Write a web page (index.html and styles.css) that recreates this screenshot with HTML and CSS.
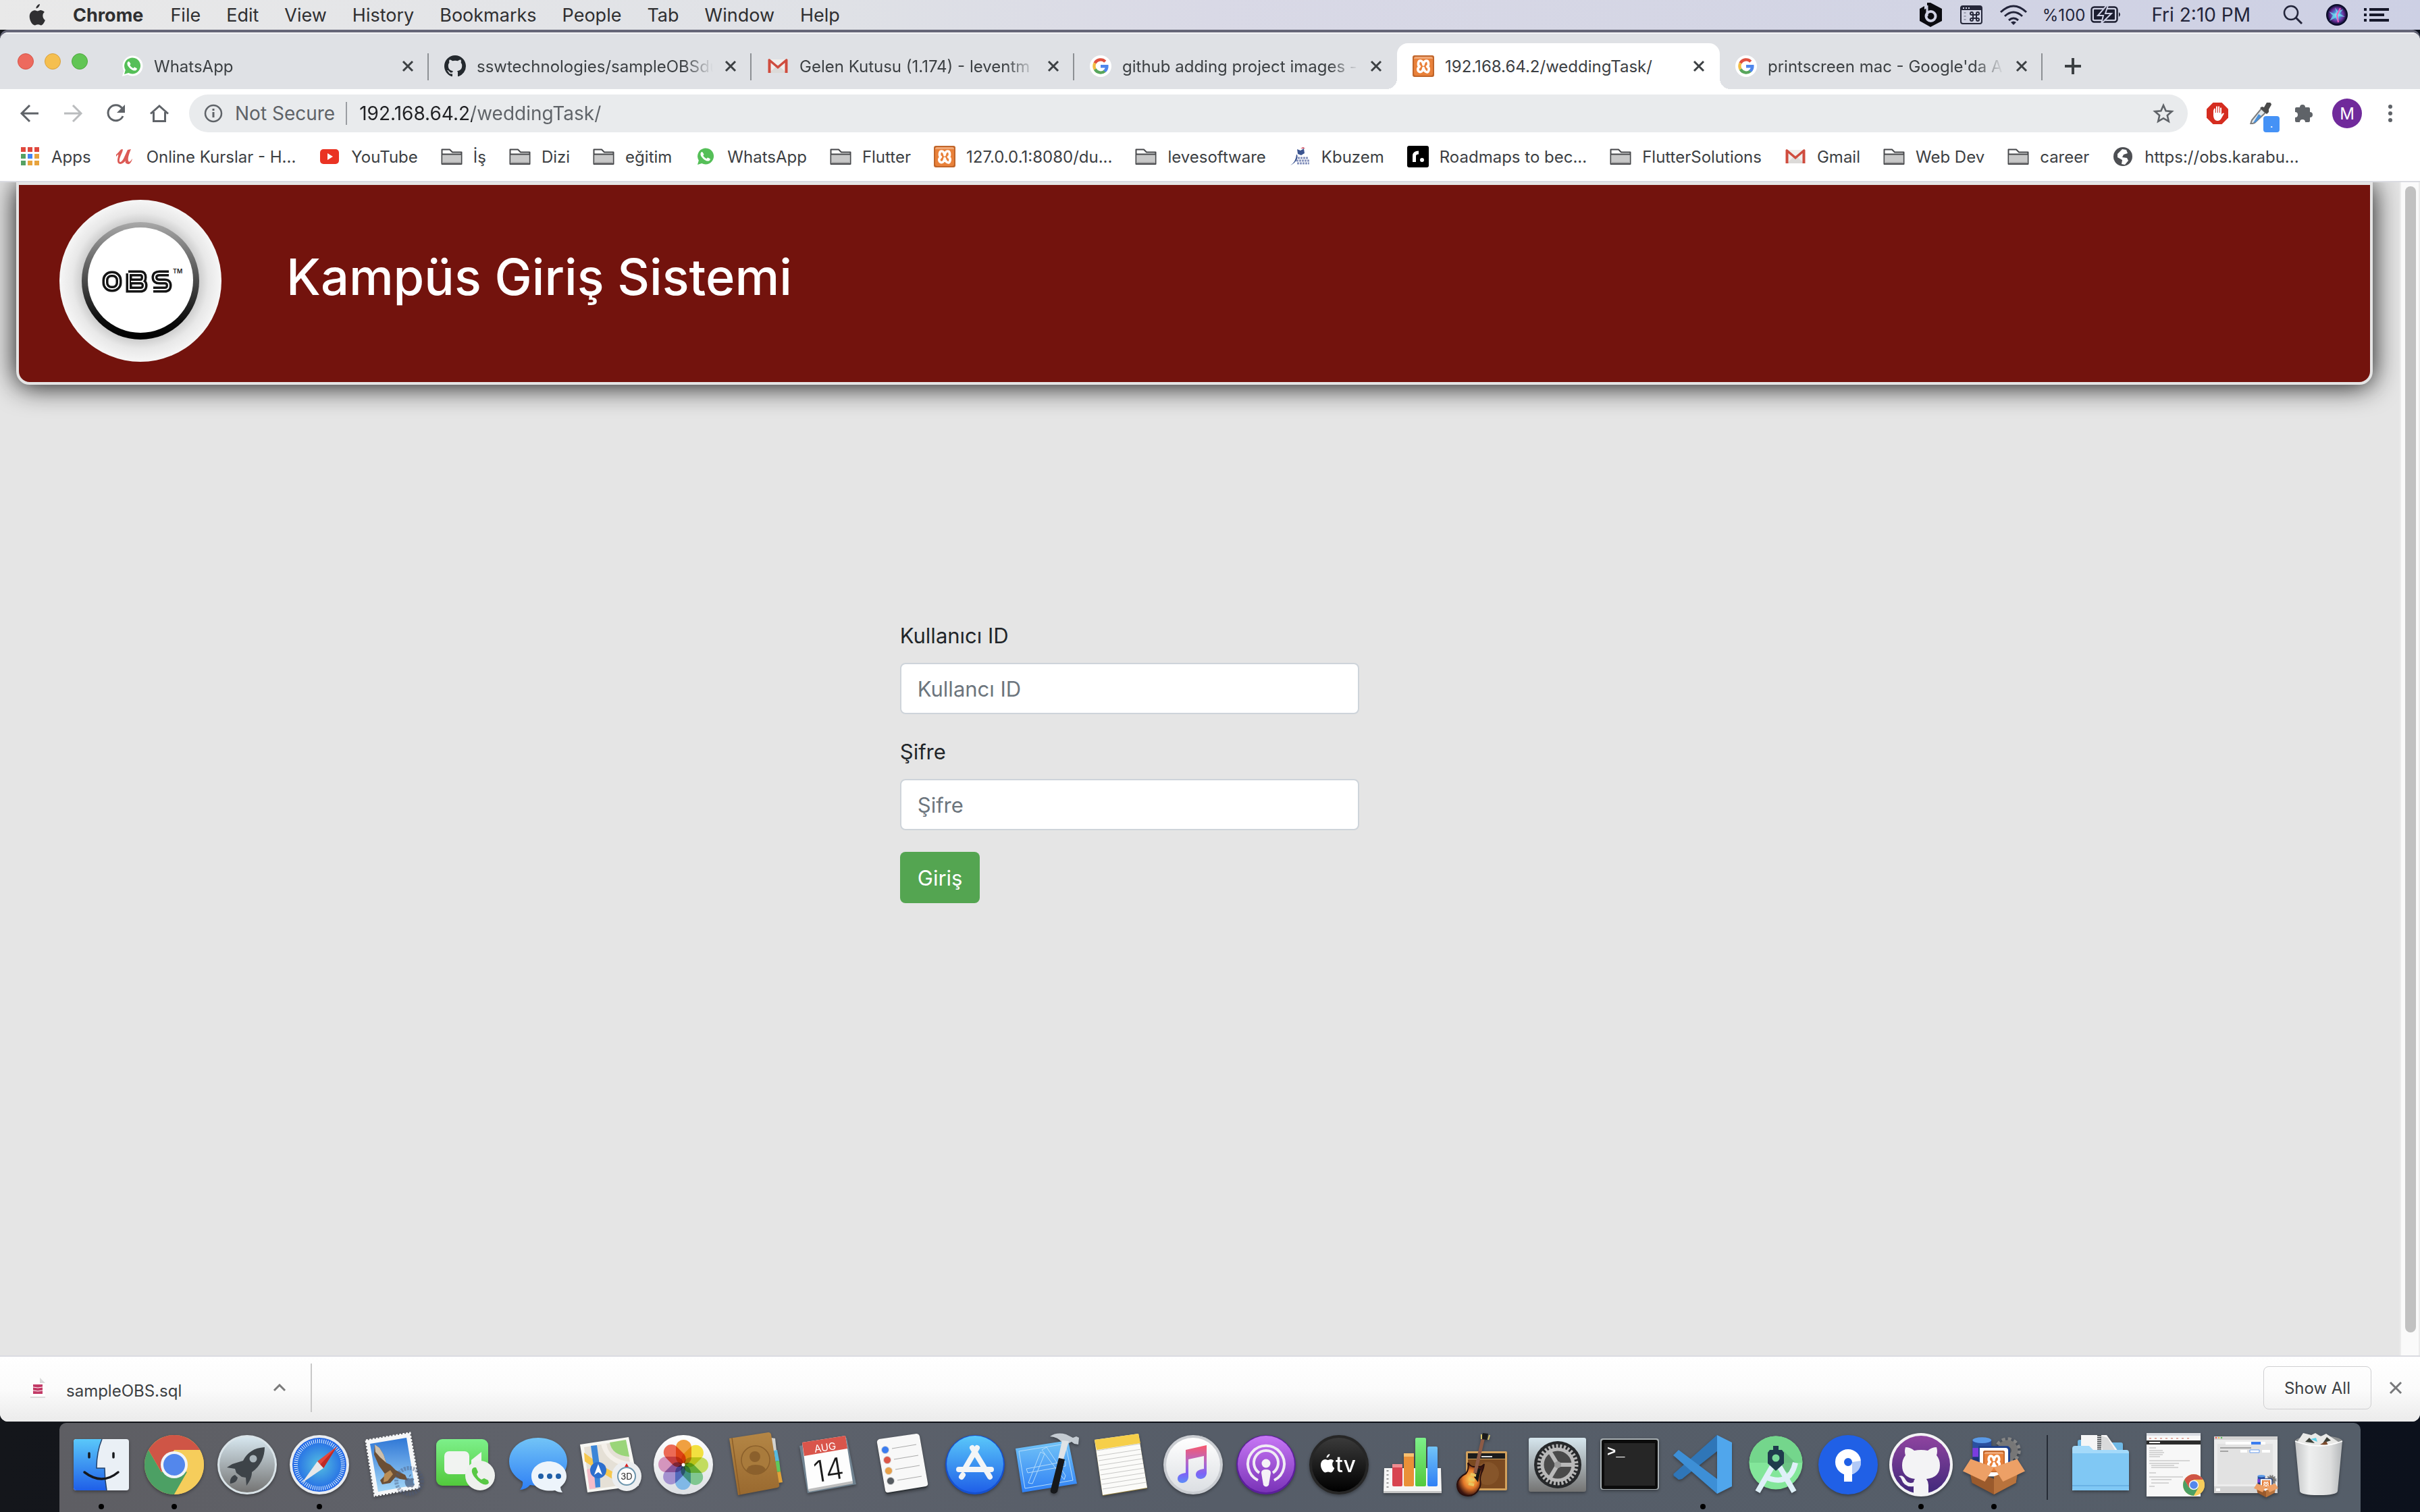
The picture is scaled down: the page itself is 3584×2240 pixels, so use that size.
FILE: index.html
```html
<!DOCTYPE html>
<html lang="tr">
<head>
<meta charset="utf-8">
<title>Kampüs Giriş Sistemi</title>
<meta name="viewport" content="width=device-width, initial-scale=1">
<link rel="stylesheet" href="styles.css">
</head>
<body>

<!-- Shared symbols and gradients -->
<svg class="defs" aria-hidden="true">
  <defs>
    <linearGradient id="g-blue" x1="0" y1="0" x2="0" y2="1"><stop offset="0" stop-color="#5ac8fa"/><stop offset="1" stop-color="#1f5fe8"/></linearGradient>
    <linearGradient id="g-msg" x1="0" y1="0" x2="0" y2="1"><stop offset="0" stop-color="#72c4f7"/><stop offset="1" stop-color="#2f80f5"/></linearGradient>
    <linearGradient id="g-green" x1="0" y1="0" x2="0" y2="1"><stop offset="0" stop-color="#7df08a"/><stop offset="1" stop-color="#52c93c"/></linearGradient>
    <linearGradient id="g-white" x1="0" y1="0" x2="0" y2="1"><stop offset="0" stop-color="#ffffff"/><stop offset="1" stop-color="#dcdfe3"/></linearGradient>
    <linearGradient id="g-gray" x1="0" y1="0" x2="0" y2="1"><stop offset="0" stop-color="#d6e6ee"/><stop offset="1" stop-color="#747473"/></linearGradient>
    <linearGradient id="g-purple" x1="0" y1="0" x2="0" y2="1"><stop offset="0" stop-color="#c777f5"/><stop offset="1" stop-color="#7a33b8"/></linearGradient>
    <linearGradient id="g-music" x1="0" y1="0" x2="0" y2="1"><stop offset="0" stop-color="#f8586c"/><stop offset=".45" stop-color="#b468c8"/><stop offset=".75" stop-color="#7d63f5"/><stop offset="1" stop-color="#5c8df8"/></linearGradient>
    <linearGradient id="g-black" x1="0" y1="0" x2="0" y2="1"><stop offset="0" stop-color="#3a3a3a"/><stop offset="1" stop-color="#000"/></linearGradient>
    <linearGradient id="g-git" x1="0" y1="0" x2="0" y2="1"><stop offset="0" stop-color="#8f44a0"/><stop offset="1" stop-color="#40287a"/></linearGradient>
    <linearGradient id="g-brown" x1="0" y1="0" x2="0" y2="1"><stop offset="0" stop-color="#b48645"/><stop offset="1" stop-color="#99692f"/></linearGradient>
    <linearGradient id="g-ring" x1="0" y1="0" x2="0" y2="1"><stop offset="0" stop-color="#a8a8a8"/><stop offset=".5" stop-color="#4a4a4a"/><stop offset=".85" stop-color="#0a0a0a"/><stop offset="1" stop-color="#000"/></linearGradient>
    <linearGradient id="g-sky" x1="0" y1="0" x2="0" y2="1"><stop offset="0" stop-color="#2f77d6"/><stop offset="1" stop-color="#a5d8f8"/></linearGradient>
    <linearGradient id="g-bin" x1="0" y1="0" x2="1" y2="0"><stop offset="0" stop-color="#c3c5c6"/><stop offset=".3" stop-color="#eeefef"/><stop offset=".75" stop-color="#dcdddd"/><stop offset="1" stop-color="#b4b7b9"/></linearGradient>
    <radialGradient id="g-safari"><stop offset="0" stop-color="#55bfe0"/><stop offset="1" stop-color="#2065e6"/></radialGradient>
    <radialGradient id="g-disc"><stop offset=".68" stop-color="#c4c4c4"/><stop offset=".84" stop-color="#e8e8e8"/><stop offset="1" stop-color="#f6f6f6"/></radialGradient>
    <radialGradient id="g-siri"><stop offset="0" stop-color="#e8fbff"/><stop offset=".35" stop-color="#4a8fd8"/><stop offset=".7" stop-color="#6b2f9a"/><stop offset="1" stop-color="#10113a"/></radialGradient>
    <radialGradient id="g-guitar"><stop offset="0" stop-color="#ffd45c"/><stop offset=".55" stop-color="#e5792a"/><stop offset="1" stop-color="#3a1410"/></radialGradient>
  </defs>
  <symbol id="apple" viewBox="0 0 24 28"><path d="M16.3 0c.2 2.3-2 5.400-4.700 5.600C11.300 3.300 13.700.4 16.300 0zM20.200 14.700c0-2.700 2.100-4.100 2.300-4.200-1.300-1.900-3.300-2.400-4.300-2.500-2-.2-3.600 1.100-4.500 1.100S11.300 8 9.800 8C6.600 8.100 3 10.800 3 16.200 3 21.400 6.700 27.500 9.900 27.500c1.300 0 2.100-1 4.100-1s2.500 1 4 1c2.300 0 4.600-4.500 5.300-6.700-.1 0-3.100-1.300-3.100-6.100z"/></symbol>
  <symbol id="folder" viewBox="0 0 32 32"><path d="M1.500 27V5.500h11.500l4 4H30.500V27z" fill="#fff" stroke="#47484b" stroke-width="2" stroke-linejoin="round"/><path d="M2.500 12.500h27V26h-27z" fill="#c8c8c8"/><path d="M2 12.500h28" stroke="#47484b" stroke-width="2"/><path d="M2.500 25h27" stroke="#a4a4a4" stroke-width="2"/></symbol>
  <symbol id="whatsapp" viewBox="0 0 32 32"><path d="M1 31l2.400-8A15 15 0 1 1 9 28.600z" fill="#fff"/><path d="M4 28l1.800-6.300A12 12 0 1 1 10.300 26z" fill="#55bf58"/><path d="M11.500 9.500c-.6-.9-1.500-.6-2.200.3-2.300 2.900.5 6.900 3.400 9.600 3 2.600 7 4.300 9.200 2.300 1.500-1.400 1-2.200.4-2.600l-2.600-1.400c-.6-.3-1 0-1.900 1.200-.4.400-3-.6-4.900-3.300-.5-.8-.7-1 0-1.800.5-.6.700-1 .4-1.600z" fill="#fff"/></symbol>
  <symbol id="google" viewBox="0 0 32 32"><circle cx="16" cy="16" r="16" fill="#fff"/><path d="M7.500 11.500A9.600 9.600 0 0 1 22.800 9.200" fill="none" stroke="#e0503f" stroke-width="4.400"/><path d="M7.700 20.700a9.800 9.800 0 0 1-.2-9.200" fill="none" stroke="#f2bd42" stroke-width="4.400"/><path d="M22.500 23.200a9.700 9.700 0 0 1-14.800-2.500" fill="none" stroke="#58a65c" stroke-width="4.400"/><path d="M16 14h11.500c.6 5-1 8.600-3.800 10.900l-3.600-2.800c1.300-.9 2.200-2.100 2.500-3.600H16z" fill="#4f86ec"/></symbol>
  <symbol id="gmail" viewBox="0 0 32 32"><path d="M3 6h26v20H3z" fill="#f0eeec"/><path d="M3 26l13-12 13 12z" fill="#dcdad8"/><path d="M1.500 6.500V26H5.500V11L16 20l10.500-9V26h4V6.500C30 5 28.500 5 27.500 5.700L16 15.500 4.500 5.700C3.500 5 2 5 1.500 6.500z" fill="#cf4c3e"/></symbol>
  <symbol id="github" viewBox="0 0 16 16"><path d="M8 0C3.580 0 0 3.580 0 8c0 3.540 2.290 6.530 5.470 7.590.4.070.55-.17.55-.38 0-.19-.01-.82-.01-1.490-2.010.37-2.530-.49-2.690-.94-.09-.23-.48-.94-.82-1.130-.28-.15-.68-.52-.01-.53.63-.01 1.080.58 1.230.82.720 1.210 1.870.87 2.330.66.070-.52.280-.87.510-1.070-1.780-.2-3.640-.89-3.640-3.950 0-.87.310-1.590.82-2.150-.08-.2-.36-1.020.08-2.120 0 0 .67-.21 2.200.82.640-.18 1.320-.27 2-.27s1.360.09 2 .27c1.530-1.040 2.200-.82 2.200-.82.440 1.100.16 1.920.08 2.120.51.560.82 1.270.82 2.150 0 3.070-1.870 3.750-3.650 3.950.29.250.54.730.54 1.480 0 1.070-.01 1.930-.01 2.200 0 .21.150.46.550.38A8 8 0 0 0 16 8c0-4.420-3.580-8-8-8z" fill="#24292e"/></symbol>
  <symbol id="xampp" viewBox="0 0 32 32"><rect width="32" height="32" rx="3" fill="#c0652a"/><rect x="2" y="2" width="28" height="28" rx="3" fill="#e9813a"/><path d="M2 5q0-3 3-3h22q3 0 3 3z" fill="#f0a877"/><path d="M8.500 11.500Q9 7.500 12 8t4 6q1-5.500 4-6t3.500 3.500-2 5Q25 18 24 22t-4 2.500-4-6q-1 5.500-4 6T8 22t2.500-5.500q-2.500-1-2-5z" fill="none" stroke="#fff" stroke-width="3.600" stroke-linejoin="round"/></symbol>
  <symbol id="close" viewBox="0 0 20 20"><path d="M3 3l14 14M17 3L3 17" stroke="#3c4043" stroke-width="3"/></symbol>
  <symbol id="chrome" viewBox="0 0 88 88"><circle cx="44" cy="44" r="44" fill="#f6cd5b"/><path d="M5.900 22A44 44 0 0 0 44 88L63 55 44 44 25 55z" fill="#4ca064"/><path d="M5.900 22A44 44 0 0 1 82.100 22H44L25 55z" fill="#cf5546"/><path d="M82.100 22H44L63 55 44 88A44 44 0 0 0 82.100 22z" fill="#f6cd5b"/><circle cx="44" cy="44" r="20" fill="#f2f4f7"/><circle cx="44" cy="44" r="16" fill="#5387ec"/></symbol>
  <symbol id="box" viewBox="0 0 100 96"><circle cx="71" cy="26" r="17" fill="none" stroke="#858585" stroke-width="7" stroke-dasharray="5 3.900"/><circle cx="71" cy="26" r="16" fill="#777"/><circle cx="71" cy="26" r="6" fill="#4b4f55"/><path d="M17 10v44h29V10z" fill="#2a50a0"/><path d="M17 22v14h29V22z" fill="#7b3ce0"/><path d="M17 36v20h29V36z" fill="#1d3478"/><ellipse cx="31.500" cy="10" rx="14.500" ry="4.500" fill="#5a9ae8"/><path d="M26 19h44q5 0 5 6v40H26z" fill="#1c3f8c"/><path d="M28 22h40q4 0 4 4v40H28z" fill="#fff"/><svg x="33" y="26" width="34" height="34"><use href="#xampp"/></svg><path d="M12 54l38 16 38-16-4 22-34 18-34-18z" fill="#9a5a2c"/><path d="M50 66v28l34-18 3-24z" fill="#b8733d"/><path d="M14 39L2 58l34 16 14-22z" fill="#eda066"/><path d="M86 39l12 19-34 16-14-22z" fill="#eda066"/></symbol>
</svg>

<nav class="menubar" aria-label="Menu bar">
  <div class="menus">
    <button class="menu" aria-label="Apple"><svg class="apple" fill="#2f2f31"><use href="#apple"/></svg></button>
    <button class="menu app-name">Chrome</button>
    <button class="menu">File</button>
    <button class="menu">Edit</button>
    <button class="menu">View</button>
    <button class="menu">History</button>
    <button class="menu">Bookmarks</button>
    <button class="menu">People</button>
    <button class="menu">Tab</button>
    <button class="menu">Window</button>
    <button class="menu">Help</button>
  </div>
  <div class="extras">
    <svg class="extra-icon" viewBox="0 0 36 36"><path d="M2 9l7-4v5l4-2V0h5l17 9v18l-17 9L2 27z" fill="#0b0b10"/><path d="M13 4v16" stroke="#d0d2e4" stroke-width="3"/><circle cx="18.500" cy="20" r="7" fill="none" stroke="#d0d2e4" stroke-width="4"/></svg>
    <svg class="extra-icon" viewBox="0 0 36 36"><rect x="3" y="5" width="31" height="26" rx="3" fill="none" stroke="#26283a" stroke-width="2"/><path d="M3 5h31v6H3z" fill="#26283a"/><path d="M6 8h2m2 0h2m2 0h2" stroke="#d3d5e6" stroke-width="2"/><path d="M21 18h5v5h-5zM21 18h-2a2 2 0 1 1 2-2zm5 0v-2a2 2 0 1 1 2 2zm0 5h2a2 2 0 1 1-2 2zm-5 0v2a2 2 0 1 1-2-2z" fill="none" stroke="#26283a" stroke-width="2"/><path d="M9 14v14" stroke="#9a9cae" stroke-width="3" stroke-dasharray="2 3"/></svg>
    <svg class="wifi" viewBox="0 0 42 30"><g fill="none" stroke="#23253a" stroke-width="3"><path d="M2 11q19-18 38 0M8 17q13-12 26 0M14 23q7-6 14 0"/></g><path d="M17 26q4-3 8 0l-4 4z" fill="#23253a"/></svg>
    <span class="percent">%100</span>
    <svg class="battery" viewBox="0 0 46 26"><rect x="1.500" y="1.500" width="38" height="22" rx="4" fill="none" stroke="#1c1e30" stroke-width="2.400"/><rect x="5" y="5" width="31" height="15" rx="1" fill="#1c1e30"/><path d="M42 9q4 3.500 0 7z" fill="#1c1e30"/><path d="M24-1L11 14h8l-3 12 15-15h-9l4-12z" fill="#1c1e30" stroke="#cfd1e5" stroke-width="2"/></svg>
    <time class="clock">Fri 2:10 PM</time>
    <svg class="search" viewBox="0 0 30 30"><circle cx="12" cy="12" r="10" fill="none" stroke="#23253a" stroke-width="2.500"/><path d="M19 19l9 9" stroke="#23253a" stroke-width="3"/></svg>
    <svg class="siri" viewBox="0 0 32 32"><circle cx="16" cy="16" r="16" fill="#0b0c28"/><circle cx="16" cy="16" r="14" fill="url(#g-siri)"/><path d="M16 16L13 5l4 5 8-2-5 6 8 5-9-1-1 9-4-7-9 5 5-8-6-6z" fill="#6fe0f0" opacity=".75"/><path d="M16 16l5-10M16 16l2 11" stroke="#ee5fc0" stroke-width="2"/></svg>
    <svg class="listing" viewBox="0 0 37 22"><path d="M0 3h4M0 11h4M0 19h4M8 3h29M8 11h22M8 19h29" stroke="#16182a" stroke-width="4"/></svg>
  </div>
</nav>

<div class="window">
  <div class="tabstrip">
    <div class="lights"><button class="light red" aria-label="Close"></button><button class="light yellow" aria-label="Minimize"></button><button class="light green" aria-label="Zoom"></button></div>
    <div class="tab"><svg class="favicon"><use href="#whatsapp"/></svg><span class="tab-title">WhatsApp</span><button class="tab-close" aria-label="Close tab"><svg><use href="#close"/></svg></button></div>
    <div class="tab"><svg class="favicon"><use href="#github"/></svg><span class="tab-title">sswtechnologies/sampleOBSdu</span><button class="tab-close" aria-label="Close tab"><svg><use href="#close"/></svg></button></div>
    <div class="tab"><svg class="favicon"><use href="#gmail"/></svg><span class="tab-title">Gelen Kutusu (1.174) - leventm</span><button class="tab-close" aria-label="Close tab"><svg><use href="#close"/></svg></button></div>
    <div class="tab before-active"><svg class="favicon"><use href="#google"/></svg><span class="tab-title">github adding project images -</span><button class="tab-close" aria-label="Close tab"><svg><use href="#close"/></svg></button></div>
    <div class="tab active"><svg class="favicon"><use href="#xampp"/></svg><span class="tab-title">192.168.64.2/weddingTask/</span><button class="tab-close" aria-label="Close tab"><svg><use href="#close"/></svg></button></div>
    <div class="tab"><svg class="favicon"><use href="#google"/></svg><span class="tab-title">printscreen mac - Google'da A</span><button class="tab-close" aria-label="Close tab"><svg><use href="#close"/></svg></button></div>
    <button class="new-tab" aria-label="New tab"><svg viewBox="0 0 24 24"><path d="M12 0v24M0 12h24" stroke="#3c4043" stroke-width="4"/></svg></button>
  </div>

  <div class="toolbar">
    <button class="tool" aria-label="Back"><svg viewBox="0 0 32 32" fill="none" stroke="#5f6368" stroke-width="3"><path d="M29 16H5M16 4L4 16l12 12"/></svg></button>
    <button class="tool" aria-label="Forward"><svg viewBox="0 0 32 32" fill="none" stroke="#babcbe" stroke-width="3"><path d="M3 16h24M16 4l12 12-12 12"/></svg></button>
    <button class="tool" aria-label="Reload"><svg viewBox="0 0 32 32" fill="none" stroke="#5f6368" stroke-width="3"><path d="M26 20A11.500 11.500 0 1 1 24.500 8"/><path d="M29 3v12H17z" fill="#5f6368" stroke="none"/></svg></button>
    <button class="tool" aria-label="Home"><svg viewBox="0 0 32 32" fill="none" stroke="#5f6368" stroke-width="3"><path d="M3 16.500L16 5l13 11.500M7.500 14v13.500h17V14"/></svg></button>
    <div class="omnibox">
      <svg class="info" viewBox="0 0 28 28"><circle cx="14" cy="14" r="12" fill="none" stroke="#5f6368" stroke-width="2.500"/><path d="M14 12v8M14 7v3" stroke="#5f6368" stroke-width="3"/></svg>
      <span class="insecure">Not Secure</span>
      <input class="url" type="text" aria-label="Address" value="192.168.64.2/weddingTask/">
      <button class="star" aria-label="Bookmark"><svg viewBox="0 0 32 32"><path d="M16 4l3.600 8.300 9 .8-6.800 5.900 2 8.800-7.800-4.600-7.800 4.600 2-8.800-6.800-5.900 9-.8z" fill="none" stroke="#5f6368" stroke-width="2.600"/></svg></button>
    </div>
    <div class="extensions">
      <button class="ext" aria-label="Ad blocker"><svg viewBox="0 0 32 32"><path d="M9.500 0h13L32 9.500v13L22.500 32h-13L0 22.500v-13z" fill="#d52d20"/><path d="M10 12v8q1 7 6 7 4 0 6-4l4-7q-2-1.500-4 2V8q-1-1.500-2 0v7h-1V6q-1-1.500-2 0v9h-1V6q-1-1.500-2 0v9h-1V9q-1.500-1-2 0z" fill="#fff"/></svg></button>
      <button class="ext" aria-label="Color picker"><svg viewBox="0 0 32 32"><path d="M17 9l6 6L7 30l-6 2 2-6z" fill="#dfe6ea" stroke="#7c7c7c" stroke-width="2"/><path d="M13 17l4 3-8 9-4 1z" fill="#4a90d9"/><path d="M15 8l3-2 3 1 4-7q6-2 7 3l-4 7 0 4-3 3z" fill="#4a4a4a"/></svg><span class="ext-badge">.</span></button>
      <button class="ext" aria-label="Extensions"><svg viewBox="0 0 32 32"><path d="M10 7a4 4 0 0 1 8 0h5q2 0 2 2v5a4 4 0 0 1 0 8v5q0 2-2 2h-5a4 4 0 0 0-8 0H5q-2 0-2-2v-5a4 4 0 0 0 0-8V9q0-2 2-2z" fill="#5f6368"/></svg></button>
      <button class="avatar" aria-label="Profile">M</button>
      <button class="dots" aria-label="More"><svg viewBox="0 0 8 28" fill="#5f6368"><circle cx="4" cy="4" r="3"/><circle cx="4" cy="14" r="3"/><circle cx="4" cy="24" r="3"/></svg></button>
    </div>
  </div>

  <nav class="bookmarks" aria-label="Bookmarks">
    <a href="#"><svg viewBox="0 0 32 32"><g><path d="M3 2h7v7H3zM13 2h7v7h-7zM23 2h7v7h-7z" fill="#e0483d"/><path d="M3 12h7v7H3z" fill="#55a163"/><path d="M13 12h7v7h-7z" fill="#4285f4"/><path d="M23 12h7v7h-7z" fill="#e8a33d"/><path d="M3 22h7v7H3z" fill="#55a163"/><path d="M13 22h7v7h-7zM23 22h7v7h-7z" fill="#e8a33d"/></g></svg>Apps</a>
    <a href="#"><svg viewBox="0 0 32 32"><path d="M3 13C7 10 9 5 12 5S9 15 8 20s2 6 6-1L20 6l5-1c-3 7-5 13-4 17s4 0 6-3c-1 5-4 9-7 8s-4-2-3-5c-4 6-12 7-12 0 0-4 2-9 1-9s-1 1-3 3z" fill="#dc5a55"/></svg>Online Kurslar - H...</a>
    <a href="#"><svg viewBox="0 0 32 32"><rect x="2" y="5" width="28" height="22" rx="5" fill="#ea3323"/><path d="M13 11v10l8-5z" fill="#fff"/></svg>YouTube</a>
    <a href="#"><svg><use href="#folder"/></svg>İş</a>
    <a href="#"><svg><use href="#folder"/></svg>Dizi</a>
    <a href="#"><svg><use href="#folder"/></svg>eğitim</a>
    <a href="#"><svg><use href="#whatsapp"/></svg>WhatsApp</a>
    <a href="#"><svg><use href="#folder"/></svg>Flutter</a>
    <a href="#"><svg><use href="#xampp"/></svg>127.0.0.1:8080/du...</a>
    <a href="#"><svg><use href="#folder"/></svg>levesoftware</a>
    <a href="#"><svg viewBox="0 0 32 32"><path d="M12 5l5 2 5-3 1 7-5 3-5-2zM12 13q3 9-10 16 8-5 9-16z" fill="#3c5590"/><path d="M17 4l4-2 3 2z" fill="#d0455a"/><path d="M13 18h16M11 22h19M12 26h18" stroke="#8793bd" stroke-width="3" stroke-dasharray="3 1"/></svg>Kbuzem</a>
    <a href="#"><svg viewBox="0 0 32 32"><rect width="32" height="32" rx="3" fill="#000"/><path d="M10.500 24V15q0-5 6.500-5" fill="none" stroke="#fff" stroke-width="5"/><circle cx="22" cy="21" r="3" fill="#fff"/></svg>Roadmaps to bec...</a>
    <a href="#"><svg><use href="#folder"/></svg>FlutterSolutions</a>
    <a href="#"><svg><use href="#gmail"/></svg>Gmail</a>
    <a href="#"><svg><use href="#folder"/></svg>Web Dev</a>
    <a href="#"><svg><use href="#folder"/></svg>career</a>
    <a href="#"><svg viewBox="0 0 32 32"><circle cx="16" cy="16" r="14" fill="#4d4f53"/><path d="M15 5l6 1 2 5-6 2-2 4 7 1 2 4-5 6-5-1 1-6-7-4 0-5z" fill="#fff"/><path d="M5 12l5-3 2-5" fill="none" stroke="#4d4f53"/></svg>https://obs.karabu...</a>
  </nav>

  <div class="viewport">
    <main class="page">
      <header class="banner">
        <svg class="logo" viewBox="0 0 240 240" role="img" aria-label="OBS">
          <circle cx="120" cy="120" r="120" fill="url(#g-disc)"/>
          <circle cx="120" cy="120" r="87" fill="url(#g-ring)"/>
          <circle cx="120" cy="119" r="78" fill="#fff"/>
          <g fill="none" stroke="#141414" stroke-width="9"><rect x="68" y="110" width="20" height="22" rx="9"/><path d="M102 109h18q5 0 5 6t-5 6h-14m14 0q6 0 6 6t-6 6h-17V109M162 109h-14q-7 0-7 6t7 6h8q6 0 6 6t-6 6h-17"/></g>
          <g fill="none" stroke="#fff" stroke-width="2"><rect x="68" y="110" width="20" height="22" rx="9"/><path d="M102 109h18q5 0 5 6t-5 6h-14m14 0q6 0 6 6t-6 6h-17V109M162 109h-14q-7 0-7 6t7 6h8q6 0 6 6t-6 6h-17"/></g>
          <text x="168" y="109" font-family="Inter, sans-serif" font-size="9" font-weight="600" fill="#222">TM</text>
        </svg>
        <h1>Kampüs Giriş Sistemi</h1>
      </header>
      <form class="login">
        <div class="field">
          <label for="user-id">Kullanıcı ID</label>
          <input id="user-id" type="text" placeholder="Kullancı ID">
        </div>
        <div class="field">
          <label for="password">Şifre</label>
          <input id="password" type="password" placeholder="Şifre">
        </div>
        <button class="submit" type="button">Giriş</button>
      </form>
    </main>
    <div class="scrollbar"><div class="thumb"></div></div>
  </div>

  <div class="shelf">
    <button class="download">
      <svg class="file" viewBox="0 0 24 32"><path d="M1 1h14l8 8v21H1z" fill="#fdfdfd"/><path d="M15 1v8h8z" fill="#d9d9d9"/><path d="M1 30h22" stroke="#bdbdbd"/><path d="M5 11h14v14H5z" fill="#c23a66"/><path d="M5 15q7 2 14 0M5 20q7 2 14 0" fill="none" stroke="#fff"/></svg>
      <span class="file-name">sampleOBS.sql</span>
      <svg class="chevron" viewBox="0 0 20 12"><path d="M2 10l8-8 8 8" fill="none" stroke="#7a7a7a" stroke-width="3"/></svg>
    </button>
    <button class="show-all">Show All</button>
    <button class="shelf-close" aria-label="Close downloads"><svg viewBox="0 0 20 20"><path d="M2 2l16 16M18 2L2 18" stroke="#77787a" stroke-width="3"/></svg></button>
  </div>
</div>

<footer class="desktop">
  <div class="dock">
    <div class="apps">
      <button class="dock-item running" aria-label="Finder"><svg viewBox="0 0 96 96"><rect x="7" y="10" width="82" height="76" rx="4" fill="#eaf0f6"/><path d="M11 10h38c-5 12-8 28-8 43h12c0 12 1 22 3 33H11q-4 0-4-4V14q0-4 4-4z" fill="url(#g-blue)"/><path d="M49 10c-5 12-8 28-8 43h12c0 12 1 22 3 33" fill="none" stroke="#24426b" stroke-width="1.500"/><path d="M23 59q26 20 50 0M30 31v6M66 31v6" fill="none" stroke="#16181c" stroke-width="3.500" stroke-linecap="round"/></svg></button>
      <button class="dock-item running" aria-label="Chrome"><svg viewBox="0 0 96 96"><svg x="4" y="4" width="88" height="88"><use href="#chrome"/></svg></svg></button>
      <button class="dock-item" aria-label="Launchpad"><svg viewBox="0 0 96 96"><circle cx="48" cy="48" r="44" fill="#d9e3e8"/><circle cx="48" cy="48" r="41" fill="url(#g-gray)"/><path d="M74 22C58 23 48 30 42 42l-16 5-8 5 12 2 2 6 8 6 6 1 1 12c6-8 8-14 8-20C68 50 74 36 74 22zM30 63c-6 2-8 8-7 13 6-1 10-3 11-9z" fill="#3d4348"/><circle cx="57" cy="39" r="5.500" fill="#a9b4ba"/></svg></button>
      <button class="dock-item running" aria-label="Safari"><svg viewBox="0 0 96 96"><circle cx="48" cy="48" r="44" fill="#e9ecef"/><circle cx="48" cy="48" r="40" fill="url(#g-safari)"/><circle cx="48" cy="48" r="35" fill="none" stroke="#e6f3ff" stroke-width="6" stroke-dasharray="1 2.050"/><path d="M74 21L54 53 45 43z" fill="#e4463b"/><path d="M74 21L54 53l-5-5z" fill="#bf2b27"/><path d="M22 75l23-32 9 10z" fill="#e6e8ea"/></svg></button>
      <button class="dock-item" aria-label="Mail"><svg viewBox="0 0 96 96"><path d="M9 12L74 1l14 81-66 12z" fill="#f6f7f8" stroke="#f6f7f8" stroke-width="3" stroke-dasharray="3 2"/><path d="M15 17l54-9 12 70-54 10z" fill="url(#g-sky)"/><path d="M22 18l7 5 6 10 4 12 6 3 8 8 14 7 4 8-12-2-6-3-8 9-12 2-3-6 8-8-10-14-7-16z" fill="#6b4f36"/><path d="M22 18l7 5 6 10 4 12-9-8-7-8z" fill="#cdbfab"/><path d="M36 62l9-6 4 6-8 10-6 2z" fill="#b98d56"/><circle cx="73" cy="72" r="19" fill="none" stroke="#4b5c7c" stroke-width="6" stroke-dasharray="3 1.500" opacity=".45"/><svg x="64" y="62" width="18" height="20" fill="#4b5c7c" opacity=".7"><use href="#apple"/></svg></svg></button>
      <button class="dock-item" aria-label="FaceTime"><svg viewBox="0 0 96 96"><rect x="5" y="10" width="77" height="69" rx="9" fill="url(#g-green)"/><rect x="17" y="28" width="37" height="34" rx="7" fill="#f1f3f1"/><path d="M57 41l15-12v30H57z" fill="#f1f3f1"/><circle cx="70" cy="64" r="22" fill="#eef1ee"/><path d="M61 52c-6 3-3 11 4 18s14 10 18 5l-1-4-6-3-4 2c-4-2-6-5-7-8l2-3-3-7z" fill="#58c944"/></svg></button>
      <button class="dock-item" aria-label="Messages"><svg viewBox="0 0 96 96"><path d="M48 8c24 0 43 15 43 35S72 79 48 79q-6 0-12-1-6 7-15 7 5-5 4-12C13 66 5 56 5 43 5 23 24 8 48 8z" fill="url(#g-msg)"/><path d="M64 43c14 0 26 9 26 22 0 7-4 12-9 16q0 4 3 8-7 0-11-3c-20 3-35-6-35-21 0-13 12-22 26-22z" fill="#edf4fb"/><g fill="#1f5fa8"><circle cx="52" cy="65" r="4"/><circle cx="65" cy="65" r="4"/><circle cx="78" cy="65" r="4"/></g></svg></button>
      <button class="dock-item" aria-label="Maps"><svg viewBox="0 0 96 96"><path d="M2 18L74 7l15 72-76 10z" fill="#f7f7f3"/><path d="M8 22l62-10 12 64-66 9z" fill="#e5e0d6"/><path d="M46 15l24-4 5 25q-26-2-29-21z" fill="#9ad579"/><path d="M33 17l8-1q3 24 36 28l1 10Q38 44 33 17z" fill="#f4f0ea"/><path d="M8 30l24 18 30 17-2 10-30-18L9 43z" fill="#f7c84e"/><path d="M18 20l9-1 4 30 1 32-8 1-2-32z" fill="#3c86d8"/><path d="M12 55l10-3 3 31-9 1z" fill="#f5bcc8"/><circle cx="29" cy="56" r="12" fill="#2d6fce"/><path d="M29 47l6 16-6-4-6 4z" fill="#fff"/><circle cx="71" cy="65" r="22" fill="#eceef0"/><circle cx="71" cy="65" r="13" fill="#fff" stroke="#6c95ad" stroke-width="2"/><path d="M71 46l3 5h-6z" fill="#d22"/><text x="71" y="70" text-anchor="middle" font-family="Inter, sans-serif" font-size="13" fill="#222">3D</text></svg></button>
      <button class="dock-item" aria-label="Photos"><svg viewBox="0 0 96 96"><circle cx="48" cy="48" r="44" fill="url(#g-white)"/><g class="petals"><rect x="37" y="11" width="23" height="37" rx="11.500" fill="#f0a040"/><rect x="37" y="11" width="23" height="37" rx="11.500" fill="#f2e040" transform="rotate(45 48 48)"/><rect x="37" y="11" width="23" height="37" rx="11.500" fill="#c2dc60" transform="rotate(90 48 48)"/><rect x="37" y="11" width="23" height="37" rx="11.500" fill="#80c690" transform="rotate(135 48 48)"/><rect x="37" y="11" width="23" height="37" rx="11.500" fill="#80b8e6" transform="rotate(180 48 48)"/><rect x="37" y="11" width="23" height="37" rx="11.500" fill="#a492d0" transform="rotate(225 48 48)"/><rect x="37" y="11" width="23" height="37" rx="11.500" fill="#d495bd" transform="rotate(270 48 48)"/><rect x="37" y="11" width="23" height="37" rx="11.500" fill="#ec6a55" transform="rotate(315 48 48)"/></g><circle cx="48" cy="48" r="2.500" fill="#fff"/></svg></button>
      <button class="dock-item" aria-label="Contacts"><svg viewBox="0 0 96 96"><path d="M70 8l6 1 2 18-6 1z" fill="#d3d3d0"/><path d="M74 27l5-1 3 16-6 1z" fill="#57b9de"/><path d="M76 43l6-1 2 16-6 1z" fill="#60c95a"/><path d="M78 59l6-1 3 16-7 1z" fill="#e0a23a"/><path d="M8 9L66 0q3 0 4 3l12 74q1 4-3 5l-58 11z" fill="url(#g-brown)"/><path d="M12 8l12 84" stroke="#8a5d28" stroke-width="1.500"/><circle cx="47" cy="41" r="21" fill="#a97b3c" stroke="#8a5f2b" stroke-width="1.500"/><circle cx="46" cy="36" r="8" fill="#8b602c"/><path d="M33 57q2-9 14-9t15 7q-14 14-29 2z" fill="#8b602c"/></svg></button>
      <button class="dock-item" aria-label="Calendar"><svg viewBox="0 0 96 96"><path d="M4 20l70-12 14 69-72 13z" fill="#6f8290"/><path d="M8 15l64-10 11 69-66 12z" fill="#fdfdfd"/><path d="M17 84l66-12v4l-65 12z" fill="#bdbdbd"/><path d="M8 15l64-10 3 19-64 11z" fill="#d9554b"/><g transform="rotate(-9 48 48)" text-anchor="middle" font-family="Inter, sans-serif"><text x="46" y="27" font-size="15" fill="#fff">AUG</text><text x="46" y="71" font-size="44" font-weight="300" fill="#1b1b1b">14</text></g></svg></button>
      <button class="dock-item" aria-label="Reminders"><svg viewBox="0 0 96 96"><path d="M14 11L69 2q4 0 5 4l12 70q1 4-3 6l-55 9q-4 1-5-4L11 17q-1-5 3-6z" fill="#2e3338"/><path d="M14 10L69 2q4 0 5 4l12 69q1 4-3 5l-55 9q-4 1-5-3L11 16q-1-4 3-6z" fill="#f8f8f8"/><g stroke="#d8d8d8"><circle cx="23" cy="26" r="5.500" fill="#3b7df0"/><circle cx="26" cy="41" r="5.500" fill="#dc5748"/><circle cx="28" cy="57" r="5.500" fill="#e8a048"/><circle cx="31" cy="72" r="5.500" fill="#555b60"/></g><path d="M33 24l36-6M36 40l36-6M38 55l36-6M41 71l36-6" stroke="#aaa"/></svg></button>
      <button class="dock-item" aria-label="App Store"><svg viewBox="0 0 96 96"><circle cx="48" cy="48" r="44" fill="#1550cf"/><circle cx="48" cy="47" r="42" fill="url(#g-blue)"/><g fill="none" stroke="#f3f5f7" stroke-width="8" stroke-linecap="round"><path d="M51 23L34 52M44 23l26 43M24 55h48M28 66l2-3"/></g></svg></button>
      <button class="dock-item" aria-label="Xcode"><svg viewBox="0 0 96 96"><path d="M1 24l78-12 13 64-81 13z" fill="url(#g-msg)"/><path d="M6 28l69-11 11 54-71 12z" fill="none" stroke="#b5dcfa"/><path d="M20 75l18-46 6 3-18 44zM40 26l7-4 28 42-2 6zM17 54l58-11v7l-56 10z" fill="none" stroke="#b5dcfa"/><path d="M52 6q10-7 24-3l10 5 5-2 4 2-1 10-6-1-4-3-6 3-8-2q-6-8-18-9z" fill="#c4cbd2"/><path d="M70 12l10 1-8 27-8-1z" fill="#dfe3e6"/><path d="M65 38l9 2-11 48q-3 4-8 2-3-1-2-5z" fill="#16181b"/></svg></button>
      <button class="dock-item" aria-label="Notes"><svg viewBox="0 0 96 96"><path d="M10 12L75 2l13 81-66 11z" fill="#8f7a36"/><path d="M10 11L75 2l13 80-66 11z" fill="#fbfbf9"/><path d="M10 11L75 2l3 14-65 10z" fill="#f6cf4a"/><path d="M13 27l64-10" stroke="#9a9a92" stroke-dasharray="1 1"/><path d="M15 35l64-10M16 42l64-10M17 49l64-10M18 56l64-10M19 63l64-10M20 70l64-10M21 77l64-10M22 84l64-10" stroke="#c9c9c7"/></svg></button>
      <button class="dock-item" aria-label="Music"><svg viewBox="0 0 96 96"><circle cx="48" cy="48" r="44" fill="#c9ccd1"/><circle cx="48" cy="48" r="40" fill="url(#g-white)"/><path d="M37 26l31-7v41c0 5-4 9-9 9-4 0-7-3-7-6 0-6 5-8 12-9V35l-23 5v26c0 5-4 9-9 9-4 0-7-3-7-6 0-6 5-8 12-9z" fill="url(#g-music)"/></svg></button>
      <button class="dock-item" aria-label="Podcasts"><svg viewBox="0 0 96 96"><circle cx="48" cy="48" r="44" fill="#5c1f9c"/><circle cx="48" cy="47" r="42" fill="url(#g-purple)"/><g fill="none" stroke="#f0ecf4" stroke-width="4"><path d="M36 71a27 27 0 1 1 24 0M38 60a18 18 0 1 1 20 0"/></g><circle cx="48" cy="46" r="6.500" fill="#f5f2f7"/><path d="M41 60q0-5 7-5t7 5l-3 18q-4 5-8 0z" fill="#f5f2f7"/></svg></button>
      <button class="dock-item" aria-label="TV"><svg viewBox="0 0 96 96"><circle cx="48" cy="48" r="44" fill="#262626"/><circle cx="48" cy="48" r="40" fill="url(#g-black)"/><svg x="17" y="32" width="26" height="28" fill="#fff"><use href="#apple"/></svg><text x="43" y="59" font-family="Inter, sans-serif" font-size="32" font-weight="500" fill="#fff">tv</text></svg></button>
      <button class="dock-item" aria-label="Numbers"><svg viewBox="0 0 96 96"><path d="M7 53h84l1 36H6z" fill="#f6f6f6"/><path d="M6 87h86v3H6z" fill="#c5c5c5"/><path d="M12 56v30" stroke="#999" stroke-width="3" stroke-dasharray="2 4"/><rect x="19" y="47" width="15" height="33" rx="2" fill="#d84450"/><rect x="36" y="31" width="15" height="49" rx="2" fill="#ea9038"/><rect x="53" y="8" width="16" height="72" rx="2" fill="url(#g-green)"/><rect x="71" y="21" width="15" height="59" rx="2" fill="url(#g-msg)"/><path d="M19 47h15v5H19z" fill="#f08c90"/><path d="M36 31h15v5H36z" fill="#f8c070"/></svg></button>
      <button class="dock-item" aria-label="GarageBand"><svg viewBox="0 0 96 96"><rect x="21" y="28" width="61" height="58" rx="2" fill="#d2a15c"/><rect x="24" y="31" width="55" height="8" fill="#1c1c1c"/><rect x="24" y="40" width="55" height="43" fill="#7b4a21"/><circle cx="53" cy="61" r="17" fill="#86552a"/><path d="M44 36h16" stroke="#ddd" stroke-width="2"/><path d="M24 45q4 6 9 6 6-1 9 0 4-1 6-4-1 8-4 13-2 6-2 10 2 8-2 14-5 10-16 10Q8 93 8 77q1-10 13-16 5-6 3-16z" fill="url(#g-guitar)" stroke="#2a0f0c" stroke-width="2"/><path d="M36 52l7 2-4 20-6-8z" fill="#151515"/><path d="M44 8l5 1-12 52-5-1z" fill="#8d5b46"/><path d="M46 1l8 1-2 9-9-1z" fill="#1a1a1a"/><path d="M44 3v7M56 4l-2 7" stroke="#d8c36a" stroke-width="2"/><path d="M28 62l8 2M27 69l7 2M25 76l8 2" stroke="#e8c560" stroke-width="4"/></svg></button>
      <button class="dock-item" aria-label="System Preferences"><svg viewBox="0 0 96 96"><rect x="6" y="8" width="85" height="80" rx="3" fill="url(#g-gray)"/><circle cx="49" cy="48" r="35" fill="#26282a"/><circle cx="49" cy="48" r="27" fill="none" stroke="#b5b5b5" stroke-width="7" stroke-dasharray="3 2.650"/><circle cx="49" cy="48" r="23" fill="#4a4a4a" stroke="#b9b9b9" stroke-width="5"/><path d="M49 48L37 28M49 48L37 68M49 48h24" stroke="#b9b9b9" stroke-width="6"/><circle cx="49" cy="48" r="5" fill="#999"/></svg></button>
      <button class="dock-item" aria-label="Terminal"><svg viewBox="0 0 96 96"><rect x="4" y="9" width="87" height="76" rx="4" fill="#a7aeb1"/><rect x="6" y="11" width="83" height="73" rx="3" fill="#0b0b0b"/><rect x="10" y="16" width="75" height="63" fill="#262626"/><text x="14" y="35" font-family="Liberation Mono, monospace" font-size="22" font-weight="700" fill="#fff">&gt;_</text></svg></button>
      <button class="dock-item running" aria-label="Code"><svg viewBox="0 0 96 96"><path d="M4 64l8 6 5-1 52-43V4z" fill="#2c6fae"/><path d="M69 4l22 11v65L69 91z" fill="#50a6ec"/><path d="M69 4v24L17 69l-5 1-8-8z" fill="#2f76b8"/><path d="M4 34l8-8 57 43v22L4 34z" fill="#3d8fd6"/></svg></button>
      <button class="dock-item" aria-label="Android Studio"><svg viewBox="0 0 96 96"><circle cx="48" cy="45" r="39.500" fill="#83e69a"/><path d="M8.500 45a39.500 39.500 0 0 1 79 0z" fill="#74d68c"/><path d="M60 28l18 18-6 16-24-10z" fill="#5fae78" opacity=".6"/><g fill="none" stroke="#dff0f8" stroke-width="8"><path d="M43 50L21 88M53 50l22 38M30 65q38 18 47-20"/></g><path d="M44 20h8v6h5l3 4v16L48 57 36 46V30l3-4h5z" fill="#1f3b4d"/><circle cx="48" cy="38" r="5.500" fill="#79d99a"/></svg></button>
      <button class="dock-item" aria-label="Sourcetree"><svg viewBox="0 0 96 96"><circle cx="48" cy="48" r="44" fill="#2060e6"/><circle cx="48" cy="44" r="12.500" fill="none" stroke="#fff" stroke-width="13"/><path d="M54 62q14-5 13-20l-13 2z" fill="#9dbcf5" opacity=".8"/><path d="M42 58h12v15H42z" fill="#fff"/></svg></button>
      <button class="dock-item running" aria-label="GitHub"><svg viewBox="0 0 96 96"><circle cx="48" cy="48" r="47" fill="#f3f3f5"/><circle cx="48" cy="48" r="43" fill="url(#g-git)"/><path d="M25 22q7 0 13 5 10-2 20 0 6-5 13-5 2 6 0 12 5 6 5 15 0 18-20 20 3 4 3 9v13q-11 4-22 0V80q-14 2-18-11-1-3-4-4 6-3 10 5 4 7 12 4 0-3 2-5-19-2-19-20 0-9 5-15-2-6 0-12z" fill="#f3f3f5"/></svg></button>
      <button class="dock-item running" aria-label="XAMPP"><svg viewBox="0 0 96 96"><svg x="-2" y="2" width="100" height="92"><use href="#box"/></svg></svg></button>
    </div>
    <div class="dock-divider"></div>
    <div class="places">
      <button class="dock-item" aria-label="Downloads"><svg viewBox="0 0 96 96"><path d="M14 14q0-3 3-3h8l4 4h49q3 0 3 3v18H14z" fill="#6fb9e6"/><path d="M19 4h38l17 24v10H19z" fill="#f6f6f6"/><path d="M46 4l12 4 15 24H52z" fill="#d9dadb"/><path d="M46 4v28" stroke="#5c6064" stroke-width="6" stroke-dasharray="2 1"/><path d="M6 24q0-4 4-4h21l6 6h49q4 0 4 4v56H6z" fill="#a4dafa"/><path d="M6 31h84v52q0 3-3 3H9q-3 0-3-3z" fill="#80c8f4"/><path d="M6 79h84" stroke="#62abe0" stroke-width="1.500"/></svg></button>
      <button class="dock-item" aria-label="Chrome window"><svg viewBox="0 0 96 96"><path d="M8 1h80v94H8z" fill="#f7f7f7"/><path d="M8 1h80v4H8z" fill="#d9dce2"/><path d="M8 12h80v6H8z" fill="#2b2b2b"/><path d="M12 15h16" stroke="#fff" stroke-width="2"/><path d="M12 9h60" stroke="#c65" stroke-width="1" stroke-dasharray="3 5"/><path d="M12 23h10M12 27h20M12 30h22M12 33h20M12 36h16M12 42h60M12 46h44M15 49h34M15 52h40M12 60h10M12 66h50M15 70h30M15 75h26M12 80h8" stroke="#b4b4b4"/><svg x="62" y="62" width="32" height="32"><use href="#chrome"/></svg></svg></button>
      <button class="dock-item" aria-label="XAMPP window"><svg viewBox="0 0 96 96"><path d="M1 6h94v84H1z" fill="#ececec"/><path d="M1 6h94v5H1z" fill="#d2d2d2"/><circle cx="4" cy="8" r="1.200" fill="#e55"/><circle cx="8" cy="8" r="1.200" fill="#eb4"/><circle cx="12" cy="8" r="1.200" fill="#5b5"/><path d="M6 17h82v60H6z" fill="#e2e2e2"/><path d="M18 14h38v4H18zM71 14h6v4h-6zM40 26h10v4H40zM72 26h12v4H72z" fill="#fff"/><path d="M56 14h14v4H56z" fill="#3b7df0"/><path d="M54 26h14v4H54z" fill="#fff" stroke="#6a9ff0"/><path d="M10 23h46M10 28h12" stroke="#666"/><path d="M1 80h94v10H1z" fill="#d4d4d4"/><path d="M4 83h6v4H4z" fill="#fff"/><svg x="59" y="61" width="38" height="36"><use href="#box"/></svg></svg></button>
      <button class="dock-item" aria-label="Trash"><svg viewBox="0 0 96 96"><ellipse cx="48" cy="13" rx="35" ry="8" fill="#8d9091"/><path d="M17 13l8-12 12 3 6-3 8 5 8-4 18 12-8 8H22z" fill="#e9e9e7"/><path d="M28 14l6-6 8 8zM54 16l6-9 6 5z" fill="#3c4038"/><path d="M36 10l8-2 2 6z" fill="#5ed0e8"/><path d="M50 18l9-5 3 6z" fill="#7c4a2c"/><path d="M13 13q35 16 70 0l-7 74q-1 6-28 6t-28-6z" fill="url(#g-bin)"/><path d="M13 13q35 14 70 0" fill="none" stroke="#fff" stroke-width="1.500"/></svg></button>
    </div>
  </div>
</footer>
</body>
</html>
```
FILE: styles.css
```css
* {
  box-sizing: border-box;
}

body {
  margin: 0;
  min-height: 100vh;
  display: flex;
  flex-direction: column;
  background: linear-gradient(90deg, #14161b, #0c111c);
  color: #3c4043;
  font-family: Inter, "Liberation Sans", sans-serif;
  font-size: 24px;
}

button,
input {
  margin: 0;
  padding: 0;
  border: 0;
  background: none;
  color: inherit;
  font: inherit;
}

svg {
  display: block;
  flex: none;
}

.defs {
  position: absolute;
  width: 0;
  height: 0;
}

/* Menu bar */

.menubar {
  display: flex;
  justify-content: space-between;
  height: 44px;
  background: linear-gradient(90deg, #e9e9e9, #dfe1e6 35%, #d9d9e6 50%, #d2d4e4 80%, #cdd0e4);
  color: #2f2f31;
  font-size: 27px;
}

.menus {
  display: flex;
  align-items: center;
  gap: 38px;
  padding-left: 40px;
}

.app-name {
  font-weight: 700;
  margin: 0 2px;
}

.apple {
  width: 28px;
  height: 32px;
}

.extras {
  display: flex;
  align-items: center;
  padding-right: 46px;
  color: #23253a;
}

.extra-icon {
  width: 36px;
  height: 36px;
  margin-right: 24px;
}

.wifi {
  width: 42px;
  height: 30px;
  margin-right: 22px;
}

.percent {
  font-size: 24px;
  margin-right: 8px;
}

.battery {
  width: 46px;
  height: 26px;
  margin-right: 44px;
}

.clock {
  margin-right: 48px;
  font-size: 28px;
}

.search {
  width: 30px;
  height: 30px;
  margin-right: 34px;
}

.siri {
  width: 32px;
  height: 32px;
  margin-right: 24px;
}

.listing {
  width: 37px;
  height: 22px;
}

/* Browser window */

.window {
  flex: 1;
  display: flex;
  flex-direction: column;
  margin-top: 4px;
  border-radius: 12px;
  overflow: hidden;
  background: #fff;
  box-shadow: 0 -4px 0 #656677;
}

.tabstrip {
  display: flex;
  height: 84px;
  padding-top: 16px;
  background: #dfe1e5;
  box-shadow: inset 0 2px 0 #f4f4f6;
}

.lights {
  display: flex;
  gap: 16px;
  width: 157px;
  padding: 15px 0 0 26px;
}

.light {
  width: 24px;
  height: 24px;
  border-radius: 50%;
}

.red {
  background: #ed6a5e;
  border: 1px solid #d55448;
}

.yellow {
  background: #f5bf4f;
  border: 1px solid #d8a03c;
}

.green {
  background: #61c554;
  border: 1px solid #4fa73f;
}

.tab {
  position: relative;
  display: flex;
  align-items: center;
  width: 478px;
  padding: 0 21px 0 23px;
}

.tab:not(.before-active):not(.active)::after {
  content: "";
  position: absolute;
  right: 0;
  top: 15px;
  width: 2px;
  height: 40px;
  background: #8d9094;
}

.favicon {
  width: 32px;
  height: 32px;
  margin-right: 16px;
}

.tab-title {
  flex: 1;
  overflow: hidden;
  white-space: nowrap;
  margin-right: 16px;
  -webkit-mask-image: linear-gradient(90deg, #000 calc(100% - 44px), transparent);
  mask-image: linear-gradient(90deg, #000 calc(100% - 44px), transparent);
}

.tab-close svg {
  width: 20px;
  height: 20px;
}

.active {
  background: #fff;
  border-radius: 16px 16px 0 0;
}

.active .tab-title {
  -webkit-mask-image: none;
  mask-image: none;
}

.active::before,
.active::after {
  content: "";
  position: absolute;
  bottom: 0;
  width: 16px;
  height: 16px;
}

.active::before {
  left: -16px;
  background: radial-gradient(circle at 0 0, transparent 16px, #fff 16px);
}

.active::after {
  right: -16px;
  background: radial-gradient(circle at 100% 0, transparent 16px, #fff 16px);
}

.new-tab {
  padding-left: 33px;
}

.new-tab svg {
  width: 24px;
  height: 24px;
}

.toolbar {
  display: flex;
  align-items: center;
  gap: 32px;
  height: 72px;
  padding: 0 40px 0 28px;
}

.tool svg {
  width: 32px;
  height: 32px;
}

.omnibox {
  flex: 1;
  display: flex;
  align-items: center;
  height: 56px;
  margin: 0 -4px;
  padding: 0 20px 0 22px;
  border-radius: 28px;
  background: #e9ebed;
  color: #5f6368;
  font-size: 28px;
}

.info {
  width: 28px;
  height: 28px;
  margin-right: 18px;
}

.insecure {
  padding-right: 16px;
  border-right: 2px solid #9b9ea2;
}

/* Host in dark text, path in grey */
.url {
  flex: 1;
  height: 56px;
  margin-left: 18px;
  background: linear-gradient(90deg, #202124 167px, #5f6368 167px);
  -webkit-background-clip: text;
  background-clip: text;
  color: transparent;
}

.star svg {
  width: 32px;
  height: 32px;
}

.extensions {
  display: flex;
  align-items: center;
}

.ext {
  position: relative;
  margin-right: 32px;
}

.ext svg {
  width: 32px;
  height: 32px;
}

.ext-badge {
  position: absolute;
  right: -12px;
  bottom: -12px;
  width: 24px;
  height: 24px;
  border-radius: 4px;
  background: #4592f6;
  color: #fff;
  font-size: 16px;
  line-height: 22px;
}

.avatar {
  width: 44px;
  height: 44px;
  margin: 0 38px 0 -6px;
  border-radius: 50%;
  background: #702a9b;
  color: #fff;
}

.dots svg {
  width: 8px;
  height: 28px;
}

.bookmarks {
  display: flex;
  align-items: center;
  gap: 34px;
  height: 66px;
  padding: 0 28px 8px;
  border-bottom: 2px solid #dadbe1;
}

.bookmarks a {
  display: flex;
  align-items: center;
  gap: 16px;
  color: inherit;
  text-decoration: none;
  white-space: nowrap;
}

.bookmarks svg {
  width: 32px;
  height: 32px;
}

/* Web page */

.viewport {
  flex: 1;
  display: flex;
  background: #e5e5e5;
}

.page {
  flex: 1;
  overflow: hidden;
}

.banner {
  display: flex;
  height: 300px;
  margin: 0 40px 0 24px;
  padding: 22px 60px;
  border: 4px solid #e5e5e5;
  border-radius: 0 0 20px 20px;
  background: #73130d;
  box-shadow: 0 2px 40px rgba(0, 0, 0, 0.95);
  color: #fff;
}

.logo {
  width: 240px;
  height: 240px;
}

h1 {
  margin: 66px 0 0 96px;
  font-size: 74px;
  font-weight: 500;
  line-height: 96px;
}

.login {
  width: 680px;
  margin: 348px 0 0 37.5%;
  color: #212529;
  font-size: 31px;
}

.field {
  margin-bottom: 32px;
}

.field label {
  display: block;
  margin-bottom: 16px;
  line-height: 48px;
}

.field input {
  display: block;
  width: 100%;
  height: 76px;
  padding: 0 24px;
  border: 2px solid #ced4da;
  border-radius: 8px;
  background: #fff;
}

.field input::placeholder {
  color: #6c757d;
  opacity: 1;
}

.submit {
  height: 76px;
  padding: 0 26px;
  border-radius: 8px;
  background: #54a551;
  color: #fff;
}

.scrollbar {
  width: 30px;
  padding: 6px 6px 34px;
  border: solid #ececec;
  border-width: 0 2px;
  background: #fafafa;
}

.thumb {
  width: 16px;
  height: 100%;
  border-radius: 8px;
  background: #c1c1c1;
}

/* Download shelf */

.shelf {
  display: flex;
  align-items: center;
  height: 98px;
  padding: 0 26px 4px 0;
  border-top: 2px solid #dadbe1;
  background: linear-gradient(#fff, #fbfbfb 50%, #ebebeb);
}

.download {
  display: flex;
  align-items: center;
  width: 462px;
  height: 72px;
  margin-right: auto;
  padding: 0 36px 0 44px;
  border-right: 2px solid #c8c8c8;
}

.file {
  width: 24px;
  height: 32px;
  margin-right: 30px;
}

.file-name {
  padding-top: 8px;
}

.chevron {
  width: 20px;
  height: 12px;
  margin-left: auto;
}

.show-all {
  height: 64px;
  margin-right: 26px;
  padding: 0 30px;
  border: 1px solid #cfcfd1;
  border-radius: 8px;
}

.shelf-close svg {
  width: 20px;
  height: 20px;
}

/* Dock */

.desktop {
  padding: 2px 88px 0;
}

.dock {
  display: flex;
  height: 132px;
  padding: 0 8px;
  border-radius: 10px 10px 0 0;
  background: linear-gradient(90deg, #5e5e63, #5f636c 25%, #565d68 50%, #555e69);
}

.apps {
  flex: 27;
  display: flex;
}

.places {
  flex: 4;
  display: flex;
}

.dock-divider {
  width: 2px;
  height: 96px;
  margin: 18px 24px 0;
  background: #262c36;
}

.dock-item {
  position: relative;
  flex: 1;
  display: flex;
  justify-content: center;
  padding-top: 14px;
}

.dock-item > svg {
  width: 96px;
  height: 96px;
  overflow: visible;
  filter: drop-shadow(0 2px 2px rgba(0, 0, 0, 0.35));
}

.running::after {
  content: "";
  position: absolute;
  left: calc(50% - 4px);
  bottom: 4px;
  width: 8px;
  height: 8px;
  border-radius: 50%;
  background: #000;
}

.petals {
  isolation: isolate;
}

.petals rect {
  mix-blend-mode: multiply;
}
```
